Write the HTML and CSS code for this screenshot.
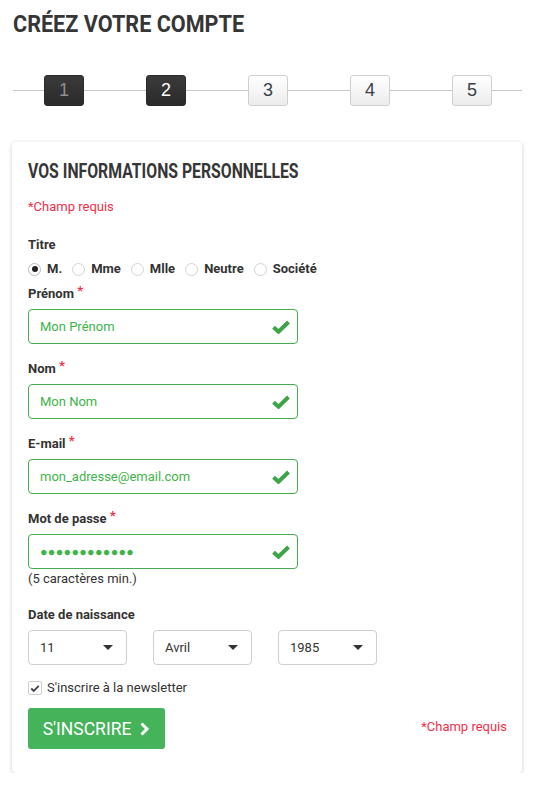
FILE: index.html
```html
<!DOCTYPE html>
<html lang="fr">
<head>
<meta charset="utf-8">
<title>Créez votre compte</title>
<link rel="stylesheet" href="styles.css">
</head>
<body>
<div class="page">
  <h1 class="title"><span class="cond">CRÉEZ VOTRE COMPTE</span></h1>
  <div class="steps">
    <span class="step done">1</span>
    <span class="step current">2</span>
    <span class="step">3</span>
    <span class="step">4</span>
    <span class="step">5</span>
  </div>
  <div class="card">
    <h2 class="card-title"><span class="cond">VOS INFORMATIONS PERSONNELLES</span></h2>
    <p class="required">*Champ requis</p>

    <div class="label">Titre</div>
    <div class="radios">
      <label class="radio"><span class="dot checked"></span>M.</label>
      <label class="radio"><span class="dot"></span>Mme</label>
      <label class="radio"><span class="dot"></span>Mlle</label>
      <label class="radio"><span class="dot"></span>Neutre</label>
      <label class="radio"><span class="dot"></span>Société</label>
    </div>

    <div class="field">
      <div class="label">Prénom <span class="star">*</span></div>
      <div class="input"><span>Mon Prénom</span><svg class="check" viewBox="0 0 18 14"><path d="M1.5 7.2 L6.5 11.7 L16.5 2" fill="none" stroke="#3da447" stroke-width="4"/></svg></div>
    </div>
    <div class="field">
      <div class="label">Nom <span class="star">*</span></div>
      <div class="input"><span>Mon Nom</span><svg class="check" viewBox="0 0 18 14"><path d="M1.5 7.2 L6.5 11.7 L16.5 2" fill="none" stroke="#3da447" stroke-width="4"/></svg></div>
    </div>
    <div class="field">
      <div class="label">E-mail <span class="star">*</span></div>
      <div class="input"><span>mon_adresse@email.com</span><svg class="check" viewBox="0 0 18 14"><path d="M1.5 7.2 L6.5 11.7 L16.5 2" fill="none" stroke="#3da447" stroke-width="4"/></svg></div>
    </div>
    <div class="field">
      <div class="label">Mot de passe <span class="star">*</span></div>
      <div class="input"><span class="pwd">●●●●●●●●●●●●</span><svg class="check" viewBox="0 0 18 14"><path d="M1.5 7.2 L6.5 11.7 L16.5 2" fill="none" stroke="#3da447" stroke-width="4"/></svg></div>
      <div class="hint">(5 caractères min.)</div>
    </div>

    <div class="label dob-label">Date de naissance</div>
    <div class="selects">
      <div class="select"><span>11</span><span class="caret"></span></div>
      <div class="select"><span>Avril</span><span class="caret"></span></div>
      <div class="select"><span>1985</span><span class="caret"></span></div>
    </div>

    <label class="newsletter"><span class="box"><svg viewBox="0 0 12 10"><path d="M1.5 5 L4.5 8 L10.5 1.8" fill="none" stroke="#444" stroke-width="2.2"/></svg></span>S'inscrire à la newsletter</label>

    <div class="actions">
      <button class="submit">S'INSCRIRE <svg viewBox="0 0 10 14" class="chev"><path d="M2 1.5 L7.5 7 L2 12.5" fill="none" stroke="#fff" stroke-width="3"/></svg></button>
      <span class="required">*Champ requis</span>
    </div>
  </div>
</div>
</body>
</html>
```
FILE: styles.css
```css
* { box-sizing: border-box; }
html, body { margin: 0; padding: 0; background: #fff; }
body { font-family: Roboto, "Liberation Sans", sans-serif; color: #333; font-size: 13px; }
.page { padding: 9px 13px 0 13px; width: 535px; }
.cond { display: inline-block; transform-origin: left center; white-space: nowrap; }
.title {
  margin: 0;
  font-size: 24px;
  line-height: 30px;
  font-weight: 700;
  color: #363636;
}
.title .cond { transform: scaleX(0.9); }
.steps {
  margin-top: 36px;
  height: 31px;
  position: relative;
  display: flex;
  gap: 62px;
  padding-left: 31px;
  width: 509px;
}
.steps::before {
  content: "";
  position: absolute;
  left: 0; right: 0; top: 15px;
  height: 1px;
  background: #c8c8c8;
}
.step {
  position: relative;
  width: 40px; height: 31px;
  border-radius: 3px;
  display: flex; align-items: center; justify-content: center;
  font-family: "Liberation Sans", Arial, sans-serif;
  font-size: 18px;
  color: #3a3f4a;
  background: linear-gradient(#ffffff, #ececec);
  border: 1px solid #cfcfcf;
}
.step.done, .step.current {
  background: linear-gradient(#3a3a3a, #2a2a2a);
  border-color: #2a2a2a;
}
.step.done { color: #8e8e8e; }
.step.current { color: #fff; }

.card {
  margin-top: 36px;
  margin-left: -1px;
  width: 510px;
  background: #fff;
  border-radius: 4px;
  box-shadow: 0 1px 4px rgba(0,0,0,0.2);
  padding: 18px 16px 24px 16px;
}
.card-title {
  margin: 0;
  font-size: 19.5px;
  line-height: 24px;
  font-weight: 700;
  color: #363636;
}
.card-title .cond { transform: scaleX(0.81); }
.required { color: #f0304a; margin: 0; font-size: 13px; }
.card > .required { margin-top: 14px; line-height: 18px; }
.label { font-weight: 700; font-size: 13px; line-height: 18px; color: #333; }
.card > .label:first-of-type { margin-top: 20px; }
.star { color: #f0304a; font-size: 13px; position: relative; top: -3px; }
.radios { display: flex; gap: 10px; margin-top: 7px; line-height: 16px; }
.radio { display: flex; align-items: center; font-weight: 700; font-size: 13px; }
.dot {
  width: 13px; height: 13px; border-radius: 50%;
  border: 1px solid #d4d4d4; background: #fff;
  margin-right: 6px; position: relative;
}
.dot.checked { border-color: #bbb; }
.dot.checked::after {
  content: ""; position: absolute; left: 2.5px; top: 2.5px;
  width: 6px; height: 6px; border-radius: 50%; background: #222;
}
.field { margin-top: 8px; }
.field + .field { margin-top: 16px; }
.input {
  margin-top: 6px;
  width: 270px; height: 35px;
  border: 1px solid #45ad4f;
  border-radius: 4px;
  display: flex; align-items: center; justify-content: space-between;
  padding: 0 7px 0 11px;
  color: #3db447;
  font-size: 13px;
}
.pwd { font-size: 12.5px; letter-spacing: 0.3px; color: #3db447; }
.check { width: 18px; height: 14px; }
.hint { font-size: 13px; line-height: 16px; margin-top: 2px; color: #333; }
.dob-label { margin-top: 19px; }
.selects { display: flex; gap: 26px; margin-top: 6px; }
.select {
  width: 99px; height: 35px;
  border: 1px solid #cfcfcf; border-radius: 4px;
  display: flex; align-items: center; justify-content: space-between;
  padding: 0 13px 0 11px;
  font-size: 13px; color: #333;
}
.caret {
  width: 0; height: 0;
  border-left: 5px solid transparent; border-right: 5px solid transparent;
  border-top: 5px solid #333;
}
.newsletter { display: flex; align-items: center; margin-top: 15px; font-size: 13px; line-height: 16px; }
.box {
  width: 14px; height: 14px; border: 1px solid #cfcfcf; border-radius: 2px;
  margin-right: 5px; display: flex; align-items: center; justify-content: center;
}
.box svg { width: 10px; height: 9px; }
.actions { display: flex; align-items: center; justify-content: space-between; margin-top: 12px; }
.actions .required { margin-right: -1px; padding-bottom: 4px; }
.submit {
  width: 137px; height: 41px;
  border: 0; border-radius: 3px;
  background: #44b35a;
  color: #fff;
  font-family: Roboto, "Liberation Sans", sans-serif;
  font-size: 17.5px;
  display: flex; align-items: center; justify-content: center; gap: 8px;
  padding: 0;
}
.chev { width: 11px; height: 14px; }
```
